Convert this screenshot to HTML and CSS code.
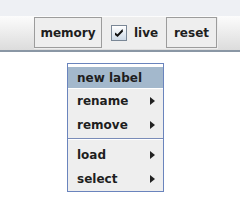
FILE: index.html
```html
<!DOCTYPE html>
<html>
<head>
<meta charset="utf-8">
<link rel="stylesheet" href="styles.css">
</head>
<body>
<div class="top"></div>
<div class="toolbar">
  <div class="group">
    <div class="btn memory">memory</div>
    <div class="check">
      <span class="box">
        <svg width="14" height="14" viewBox="0 0 14 14"><path d="M3 6.5 L5.5 8.3 L10.5 3 L11 5.5 L5.6 11 L3 9 Z" fill="#111"/></svg>
      </span>
      <span class="lbl">live</span>
    </div>
    <div class="btn reset">reset</div>
  </div>
</div>
<div class="menu">
  <div class="pad"></div>
  <div class="item sel"><span>new label</span></div>
  <div class="item"><span>rename</span><i class="arr"></i></div>
  <div class="item"><span>remove</span><i class="arr"></i></div>
  <div class="sep"></div>
  <div class="item"><span>load</span><i class="arr"></i></div>
  <div class="item"><span>select</span><i class="arr"></i></div>
</div>
</body>
</html>
```
FILE: styles.css
```css
html, body {
  margin: 0;
  padding: 0;
}
body {
  width: 240px;
  height: 206px;
  background: #ffffff;
  position: relative;
  overflow: hidden;
  font-family: "DejaVu Sans", sans-serif;
  font-weight: bold;
  font-size: 12px;
  color: #1e1e1e;
}
.top {
  height: 16px;
  background: #eef0f4;
}
.toolbar {
  height: 36px;
  box-sizing: border-box;
  padding: 1px 0 0 34px;
  background: linear-gradient(#fcfcfc, #dcdcdc);
  border-bottom: 2px solid #8a97a5;
}
.group {
  display: flex;
  width: 184px;
  height: 32px;
  background: #eeeeee;
}
.btn {
  box-sizing: border-box;
  height: 31px;
  border: 1px solid #9c9c9c;
  background: #eeeeee;
  display: flex;
  align-items: center;
  justify-content: center;
}
.memory { width: 68px; }
.reset { width: 51px; }
.check {
  width: 64px;
  height: 31px;
  display: flex;
  align-items: center;
  box-sizing: border-box;
  padding-left: 9px;
  gap: 7px;
}
.box {
  box-sizing: border-box;
  width: 16px;
  height: 16px;
  border: 1px solid #7a8796;
  background: linear-gradient(#ffffff, #cdd9e6);
  display: flex;
  align-items: center;
  justify-content: center;
}
.menu {
  position: absolute;
  left: 67px;
  top: 63px;
  width: 97px;
  box-sizing: border-box;
  border: 1px solid #6a84bd;
  background: #eeeeee;
}
.pad {
  height: 3px;
  background: #ffffff;
}
.item {
  height: 24px;
  display: flex;
  align-items: center;
  justify-content: space-between;
  padding: 0 8px 0 9px;
}
.item.sel {
  height: 21px;
  background: #a3b8cc;
  border-bottom: 1px solid #ffffff;
}
.arr {
  width: 0;
  height: 0;
  border-top: 4px solid transparent;
  border-bottom: 4px solid transparent;
  border-left: 5px solid #222222;
}
.sep {
  height: 6px;
  box-sizing: border-box;
  padding-top: 1px;
}
.sep::before {
  content: "";
  display: block;
  height: 1px;
  background: #7a8cb8;
  border-bottom: 1px solid #ffffff;
}
```
